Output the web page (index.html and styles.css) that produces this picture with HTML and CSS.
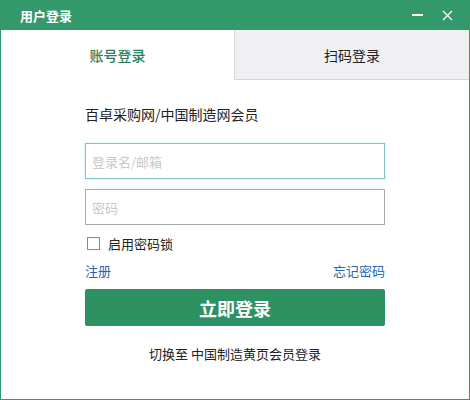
FILE: index.html
```html
<!DOCTYPE html>
<html lang="zh-CN">
<head>
    <meta charset="UTF-8">
    <title>用户登录</title>
    <link rel="stylesheet" href="styles.css">
</head>
<body>
    <div class="window">
        <div class="titlebar">
            <span class="title">用户登录</span>
            <div class="win-btns">
                <span class="win-min"></span>
                <svg class="win-close" width="11" height="11" viewBox="0 0 11 11">
                    <path d="M1 1L10 10M10 1L1 10" stroke="#fff" stroke-width="1.2"/>
                </svg>
            </div>
        </div>

        <div class="tabs">
            <div class="tab active">账号登录</div>
            <div class="tab">扫码登录</div>
        </div>

        <div class="form">
            <div class="site-label">百卓采购网/中国制造网会员</div>
            <input class="field focus" type="text" placeholder="登录名/邮箱">
            <input class="field" type="password" placeholder="密码">
            <label class="check-row">
                <span class="checkbox"></span>
                启用密码锁
            </label>
            <div class="links">
                <a href="#">注册</a>
                <a href="#">忘记密码</a>
            </div>
            <button class="login-btn">立即登录</button>
            <div class="switch">切换至 中国制造黄页会员登录</div>
        </div>
    </div>
</body>
</html>
```

FILE: styles.css
```css
html, body {
    margin: 0;
    padding: 0;
}

body {
    font-family: "Noto Sans CJK SC", "Liberation Sans", sans-serif;
    background-color: #fff;
}

.window {
    width: 470px;
    height: 400px;
    box-sizing: border-box;
    border: 1px solid #33996a;
    border-top: none;
    background-color: #fff;
}

.titlebar {
    height: 30px;
    margin: 0 -1px;
    background-color: #33996a;
    display: flex;
    align-items: center;
    justify-content: space-between;
    padding: 0 0 0 20px;
}

.title {
    color: #fff;
    font-size: 13px;
    font-weight: bold;
}

.win-btns {
    display: flex;
    align-items: center;
    gap: 19px;
    padding-right: 17px;
}

.win-min {
    display: block;
    width: 11px;
    height: 2px;
    background-color: #fff;
}

.win-close {
    display: block;
}

.tabs {
    display: flex;
    height: 50px;
}

.tab {
    flex: 1;
    display: flex;
    align-items: center;
    justify-content: center;
    font-size: 14px;
    color: #222;
    background-color: #f0f0f2;
    border-left: 1px solid #d6d6d6;
    border-bottom: 1px solid #d6d6d6;
}

.tab.active {
    color: #2a8058;
    font-weight: 500;
    background-color: #fff;
    border: none;
    flex: 0 0 233px;
}

.form {
    width: 300px;
    margin: 0 auto;
    padding-top: 24px;
}

.site-label {
    font-size: 14px;
    color: #222;
    line-height: 20px;
    margin-bottom: 19px;
}

.field {
    display: block;
    width: 300px;
    height: 36px;
    box-sizing: border-box;
    border: 1px solid #aaa;
    padding: 0 6px;
    font-family: inherit;
    font-size: 13px;
    outline: none;
    margin-bottom: 10px;
}

.field.focus {
    border-color: #80c4c4;
    box-shadow: 0 0 2px #a8eef0;
}

.field::placeholder {
    color: #c8c8c8;
}

.check-row {
    display: flex;
    align-items: center;
    gap: 8px;
    font-size: 13px;
    color: #222;
    padding-left: 2px;
    height: 16px;
}

.checkbox {
    display: block;
    width: 11px;
    height: 11px;
    border: 1px solid #888;
}

.links {
    display: flex;
    justify-content: space-between;
    margin-top: 10px;
    height: 20px;
    line-height: 20px;
}

.links a {
    font-size: 13px;
    color: #2566ae;
    text-decoration: none;
}

.login-btn {
    display: block;
    width: 300px;
    height: 37px;
    margin-top: 8px;
    border: none;
    border-radius: 2px;
    background-color: #2e9162;
    color: #fff;
    font-family: inherit;
    font-size: 18px;
    font-weight: bold;
}

.switch {
    text-align: center;
    font-size: 13px;
    color: #222;
    margin-top: 18px;
}
```
